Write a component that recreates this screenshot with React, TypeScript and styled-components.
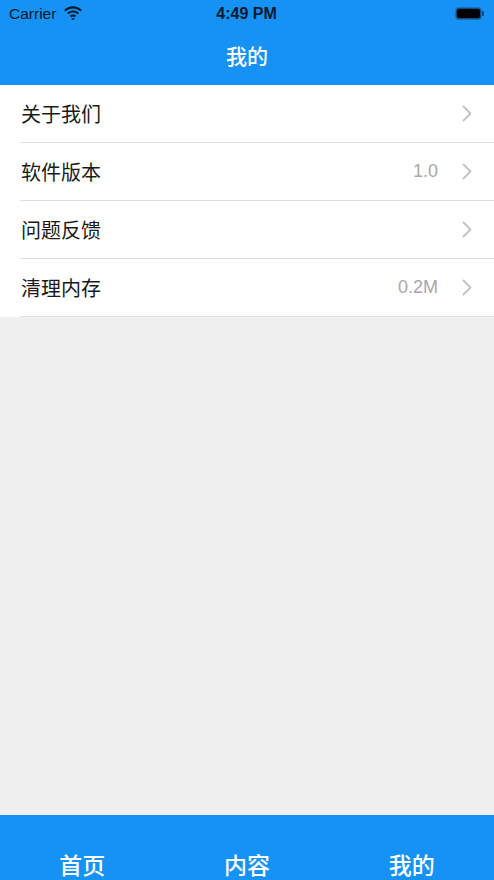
import styled, { createGlobalStyle } from "styled-components";

const GlobalStyle = createGlobalStyle`
  html, body {
    margin: 0;
    padding: 0;
    background: #f0f0f0;
  }
  body {
    font-family: "Noto Sans CJK SC", "Noto Sans", sans-serif;
  }
`;

const menuList = [
  { title: "关于我们", value: "" },
  { title: "软件版本", value: "1.0" },
  { title: "问题反馈", value: "" },
  { title: "清理内存", value: "0.2M" },
];

const tabList = ["首页", "内容", "我的"];

const App = () => {
  return (
    <Page>
      <GlobalStyle />
      <Top>
        <StatusBar>
          <StatusLeft>
            <Carrier>Carrier</Carrier>
            <svg width="20" height="15" viewBox="0 0 19 14">
              <path
                d="M9.5 2.2c2.7 0 5.2 1 7.1 2.8l1.3-1.4C15.6 1.4 12.6.2 9.5.2S3.4 1.4 1.1 3.6L2.4 5c1.9-1.8 4.4-2.8 7.1-2.8z"
                fill="#0b1a30"
              />
              <path
                d="M9.5 6.1c1.7 0 3.2.6 4.4 1.7l1.3-1.4C13.7 5 11.7 4.1 9.5 4.1S5.3 5 3.8 6.4l1.3 1.4C6.3 6.7 7.8 6.1 9.5 6.1z"
                fill="#0b1a30"
              />
              <path
                d="M9.5 9.9c.7 0 1.2.3 1.7.7l1.4-1.4c-.8-.8-1.9-1.3-3.1-1.3s-2.3.5-3.1 1.3l1.4 1.4c.5-.4 1-.7 1.7-.7zM9.5 13.4l1.5-1.5c-.4-.4-.9-.6-1.5-.6s-1.1.2-1.5.6z"
                fill="#0b1a30"
              />
            </svg>
          </StatusLeft>
          <Time>4:49 PM</Time>
          <Battery>
            <BatteryFill />
            <BatteryTip />
          </Battery>
        </StatusBar>
        <NavBar>我的</NavBar>
      </Top>
      <Menu>
        {menuList.map((item) => (
          <Row key={item.title}>
            <RowTitle>{item.title}</RowTitle>
            <RowValue>{item.value}</RowValue>
            <svg width="10" height="17" viewBox="0 0 10 17">
              <path
                d="M1.5 1.5l7 7-7 7"
                fill="none"
                stroke="#c2c2c6"
                strokeWidth="1.8"
                strokeLinecap="round"
                strokeLinejoin="round"
              />
            </svg>
          </Row>
        ))}
      </Menu>
      <Spacer />
      <TabBar>
        {tabList.map((tab) => (
          <Tab key={tab}>{tab}</Tab>
        ))}
      </TabBar>
    </Page>
  );
};

export default App;

const Page = styled.div`
  display: flex;
  flex-direction: column;
  width: 494px;
  height: 880px;
  overflow: hidden;
  background: #f0f0f0;
`;

const Top = styled.div`
  background: #1592f3;
`;

const StatusBar = styled.div`
  display: grid;
  grid-template-columns: 1fr auto 1fr;
  align-items: center;
  height: 27px;
  padding: 0 10px 0 9px;
  color: #0b1a30;
  font-family: "Liberation Sans", "Noto Sans", sans-serif;
`;

const StatusLeft = styled.div`
  display: flex;
  align-items: center;
  gap: 7px;
`;

const Carrier = styled.span`
  font-size: 15.5px;
`;

const Time = styled.span`
  font-size: 16px;
  font-weight: 700;
`;

const Battery = styled.div`
  justify-self: end;
  display: flex;
  align-items: center;
`;

const BatteryFill = styled.div`
  width: 23px;
  height: 9px;
  background: #000;
  border: 1.5px solid #0b4f86;
  border-radius: 3px;
  box-shadow: 0 0 0 1px #1d6fb5;
`;

const BatteryTip = styled.div`
  width: 2px;
  height: 5px;
  margin-left: 1px;
  background: #0b4f86;
  border-radius: 0 1px 1px 0;
`;

const NavBar = styled.div`
  display: flex;
  align-items: center;
  justify-content: center;
  height: 55px;
  padding-bottom: 3px;
  color: #fff;
  font-size: 21px;
  font-weight: 500;
`;

const Menu = styled.div`
  background: #fff;
`;

const Row = styled.div`
  display: flex;
  align-items: center;
  height: 57px;
  margin-left: 20px;
  padding-right: 22px;
  border-bottom: 1px solid #dedede;
`;

const RowTitle = styled.div`
  margin-right: auto;
  padding-left: 1px;
  font-size: 20px;
  color: #1a1a1a;
`;

const RowValue = styled.div`
  margin-right: 24px;
  font-family: "Liberation Sans", "Noto Sans", sans-serif;
  font-size: 18px;
  color: #a8a8a8;
`;

const Spacer = styled.div`
  flex: 1;
`;

const TabBar = styled.div`
  display: grid;
  grid-template-columns: repeat(3, 1fr);
  align-items: end;
  height: 65px;
  flex-shrink: 0;
  background: #1592f3;
`;

const Tab = styled.div`
  text-align: center;
  color: #fff;
  font-size: 23px;
  font-weight: 500;
  line-height: 1;
  margin-bottom: 4px;
`;
